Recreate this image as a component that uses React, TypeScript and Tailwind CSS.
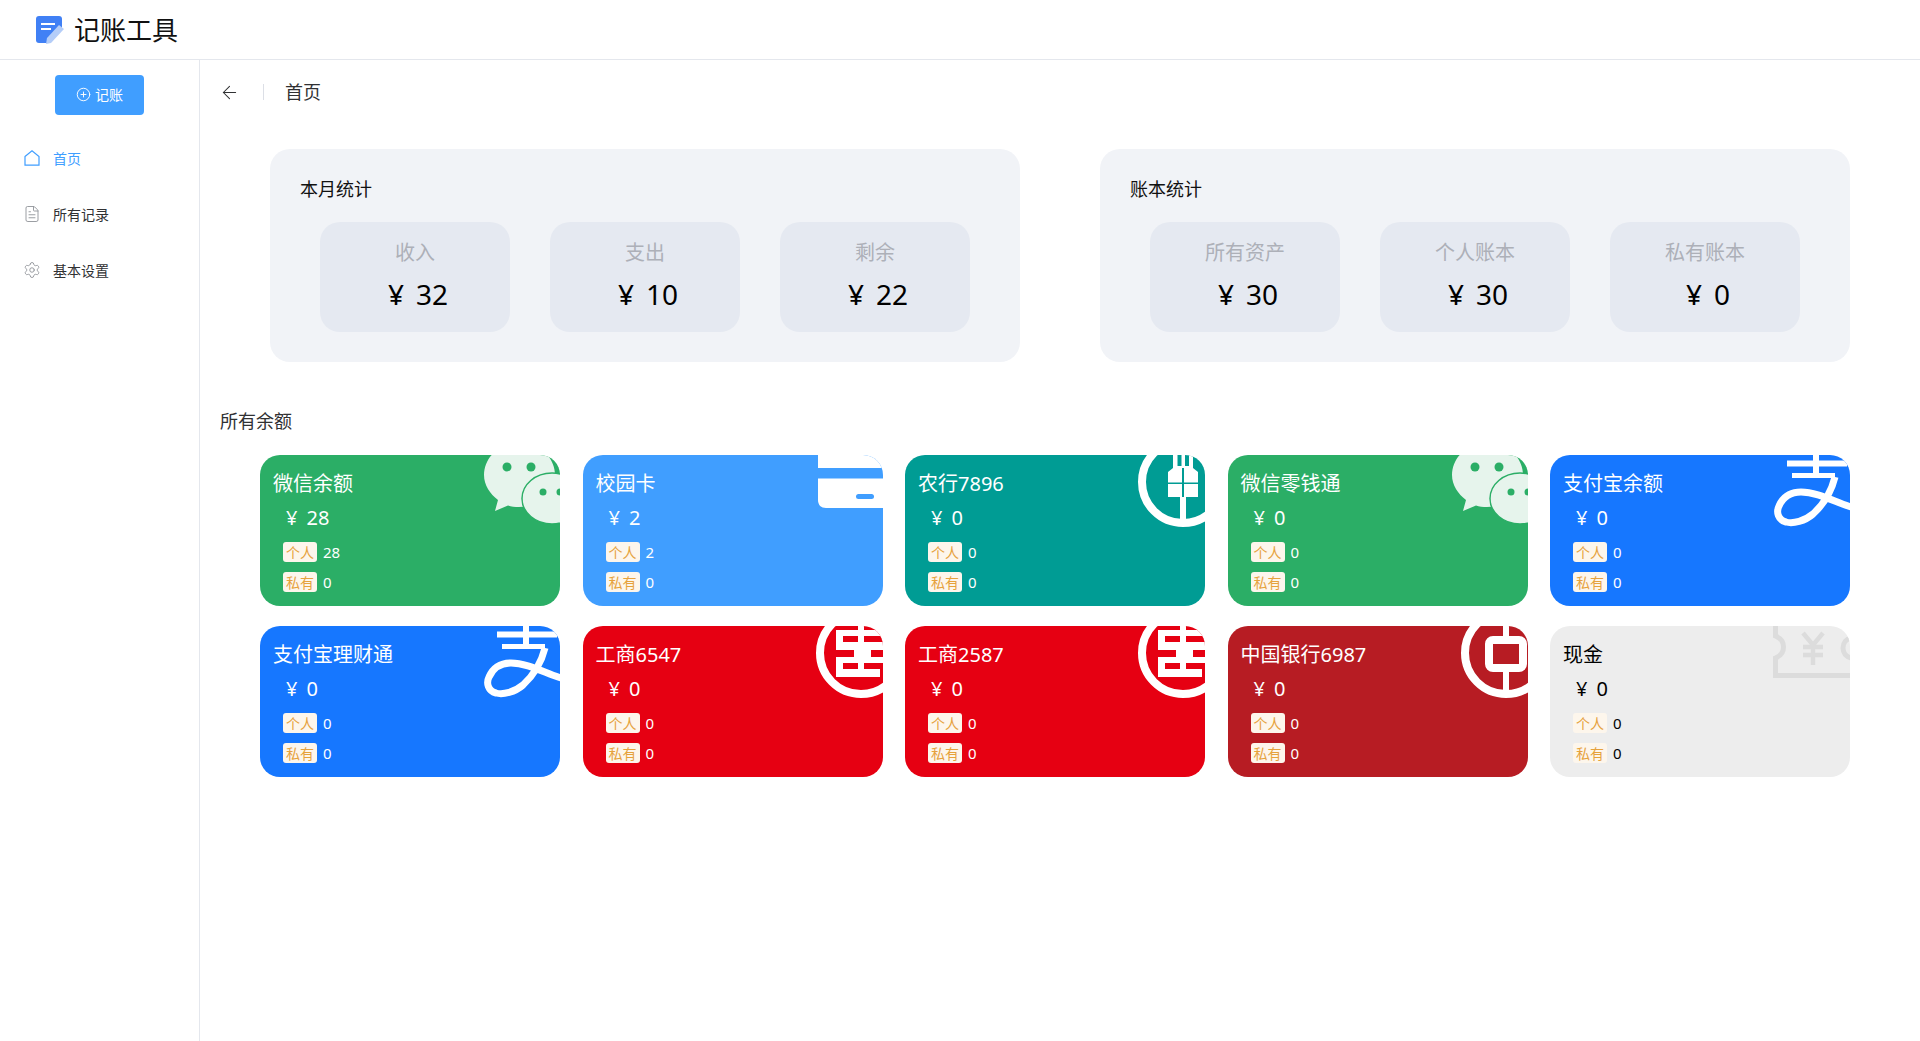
import { ArrowLeft, CirclePlus, FileText, Settings } from "lucide-react";

type CardIcon = "wechat" | "wallet" | "abc" | "icbc" | "boc" | "alipay" | "cash";

const accounts: { name: string; total: number; personal: number; priv: number; bg: string; icon: CardIcon; dark?: boolean }[] = [
  { name: "微信余额", total: 28, personal: 28, priv: 0, bg: "bg-[#2bae66]", icon: "wechat" },
  { name: "校园卡", total: 2, personal: 2, priv: 0, bg: "bg-[#409eff]", icon: "wallet" },
  { name: "农行7896", total: 0, personal: 0, priv: 0, bg: "bg-[#009c94]", icon: "abc" },
  { name: "微信零钱通", total: 0, personal: 0, priv: 0, bg: "bg-[#2bae66]", icon: "wechat" },
  { name: "支付宝余额", total: 0, personal: 0, priv: 0, bg: "bg-[#1677ff]", icon: "alipay" },
  { name: "支付宝理财通", total: 0, personal: 0, priv: 0, bg: "bg-[#1677ff]", icon: "alipay" },
  { name: "工商6547", total: 0, personal: 0, priv: 0, bg: "bg-[#e60012]", icon: "icbc" },
  { name: "工商2587", total: 0, personal: 0, priv: 0, bg: "bg-[#e60012]", icon: "icbc" },
  { name: "中国银行6987", total: 0, personal: 0, priv: 0, bg: "bg-[#b71c23]", icon: "boc" },
  { name: "现金", total: 0, personal: 0, priv: 0, bg: "bg-[#ededed]", icon: "cash", dark: true },
];

const panels = [
  { title: "本月统计", items: [["收入", 32], ["支出", 10], ["剩余", 22]] },
  { title: "账本统计", items: [["所有资产", 30], ["个人账本", 30], ["私有账本", 0]] },
];

function BrandIcon({ icon }: { icon: CardIcon }) {
  // viewBox is in card pixels: the top right corner of a 300px wide card
  return (
    <svg viewBox="220 0 80 80" className="absolute top-0 right-0 h-[80px] w-[80px]">
      {icon === "wechat" && (
        <g>
          <path d="M259 -12c20 0 36 14 36 32s-16 32-36 32c-4 0-8-.5-11-1.500l-13 5.500 3-11c-8-6-14-15-14-25 0-18 16-32 35-32z" fill="#e6f4ec" />
          <circle cx="247" cy="12" r="4.500" fill="#2bae66" />
          <circle cx="271" cy="12" r="4.500" fill="#2bae66" />
          <ellipse cx="292" cy="43.500" rx="30" ry="25.500" fill="#e6f4ec" stroke="#2bae66" strokeWidth="1.500" />
          <circle cx="283" cy="37" r="3.500" fill="#2bae66" />
          <circle cx="300" cy="37" r="3.500" fill="#2bae66" />
        </g>
      )}
      {icon === "wallet" && (
        <g fill="#fff">
          <path d="M240 -4h60v17h-65v-12c0-3 2-5 5-5z" />
          <path d="M235 23.500h65v29.500h-57c-5 0-8-3-8-8z" />
          <rect x="273" y="39" width="18" height="5" rx="2.500" fill="#409eff" />
        </g>
      )}
      {icon === "abc" && (
        <g>
          <circle cx="278" cy="27" r="41" fill="none" stroke="#fff" strokeWidth="8" />
          <path d="M268 -2h20v15l5 4v25h-12v26h-6v-26h-12v-25l5-4z" fill="#fff" />
          <path d="M272.500 -2h4v13h-4zM280 -2h4v13h-4z" fill="#009c94" />
          <rect x="263" y="27.500" width="30" height="1.500" fill="#009c94" />
          <rect x="277" y="13" width="2" height="29" fill="#009c94" />
        </g>
      )}
      {icon === "icbc" && (
        <g>
          <circle cx="278" cy="27" r="41" fill="none" stroke="#fff" strokeWidth="8" />
          <path d="M253 4h44v12h3v21h-3v14h-44z" fill="#fff" />
          <path d="M260 10h37v6h-37zM253 24h18v7h-18zM288 24h12v7h-12zM260 37h37v6h-37z" fill="#e60012" />
          <rect x="275" y="-2" width="6" height="53" fill="#fff" />
        </g>
      )}
      {icon === "boc" && (
        <g>
          <circle cx="278" cy="27" r="41" fill="none" stroke="#fff" strokeWidth="8" />
          <rect x="275" y="-2" width="6" height="66" fill="#fff" />
          <rect x="261" y="14" width="34" height="28" rx="4" fill="#b71c23" stroke="#fff" strokeWidth="8" />
        </g>
      )}
      {icon === "alipay" && (
        <g fill="none" stroke="#fff" strokeWidth="5">
          <path d="M237 8.500h60M266 -2v22" strokeWidth="6" />
          <path d="M242 20.500h43" />
          <path d="M285 22c-3 12-10 26-22 37-8 7-20 10-27 8-8-2-10-10-7-16 4-9 12-14 22-14 16 0 32 9 50 15" strokeWidth="7" />
        </g>
      )}
      {icon === "cash" && (
        <g fill="none" stroke="#dcdcdc" strokeWidth="5">
          <path d="M225.500 -2v12c5 2 8 6 8 11s-3 9-8 11v17.500h76" />
          <path d="M302 12c-6 1-9 5-9 10s3 9 9 10" />
          <path d="M253 7l10 12 10-12M263 19v20M253 21h20M253 29h20" strokeWidth="4.500" />
        </g>
      )}
    </svg>
  );
}

function Tag({ label, value }: { label: string; value: number }) {
  return (
    <div className="flex h-5 items-center gap-[6px]">
      <span className="flex h-5 w-[34px] items-center justify-center rounded-[3px] bg-[#fdf6ec] text-[14px] text-[#e6a23c]">
        {label}
      </span>
      <span className="text-[15px]">{value}</span>
    </div>
  );
}

function AccountCard({ account }: { account: (typeof accounts)[number] }) {
  return (
    <div
      className={`relative h-[151px] w-[300px] overflow-hidden rounded-[20px] pt-[17px] pl-[13px] ${account.bg} ${
        account.dark ? "text-black" : "text-white"
      }`}
    >
      <div className="h-6 text-[20px] leading-6">{account.name}</div>
      <div className="mt-[9px] ml-[13px] flex h-[26px] gap-[9px] text-[20px] leading-[26px]">
        <span>¥</span>
        <span>{account.total}</span>
      </div>
      <div className="mt-[11px] ml-[10px] flex flex-col gap-[10px]">
        <Tag label="个人" value={account.personal} />
        <Tag label="私有" value={account.priv} />
      </div>
      <BrandIcon icon={account.icon} />
    </div>
  );
}

function HomeIcon() {
  return (
    <svg viewBox="0 0 18 18" className="h-[18px] w-[18px]" fill="none" stroke="#409eff" strokeWidth="1.200">
      <path d="M2 7.500 9 1.800l7 5.700v8.700H2z" />
    </svg>
  );
}

function NavItem({ icon, label, active }: { icon: React.ReactNode; label: string; active?: boolean }) {
  return (
    <div className={`flex h-14 items-center gap-[12px] pl-[23px] text-[14px] ${active ? "text-[#409eff]" : "text-[#303133]"}`}>
      {icon}
      <span>{label}</span>
    </div>
  );
}

export default function App() {
  return (
    <div className="flex h-screen w-full flex-col bg-white font-['Noto_Sans','Noto_Sans_CJK_SC',sans-serif] text-[#303133]">
      {/* Header */}
      <header className="flex h-[60px] shrink-0 items-center gap-[10px] border-b border-[#e4e7ed] pl-9">
        <svg viewBox="0 0 28 28" className="h-7 w-7">
          <path d="M3 0h20c2 0 3 1 3 3v11L13 27H3c-2 0-3-1-3-3V3c0-2 1-3 3-3z" fill="#4080f5" />
          <path d="M5 8h14M5 13h10" stroke="#fff" strokeWidth="2" fill="none" />
          <path d="M23 9l5 4-13 14-5 1 1-6z" fill="#b4cdf8" />
        </svg>
        <span className="text-[26px] leading-none text-[#111]">记账工具</span>
      </header>

      <div className="flex min-h-0 flex-1">
        {/* Sidebar */}
        <aside className="w-[200px] shrink-0 border-r border-[#e4e7ed]">
          <div className="flex justify-center pt-[15px] pb-[15px]">
            <button className="flex h-10 w-[89px] items-center justify-center gap-1 rounded bg-[#409eff] pb-[2px] text-[14px] text-white">
              <CirclePlus size={15} strokeWidth={1.500} />
              记账
            </button>
          </div>
          <NavItem icon={<HomeIcon />} label="首页" active />
          <NavItem icon={<FileText size={18} strokeWidth={1.200} color="#909399" />} label="所有记录" />
          <NavItem icon={<Settings size={18} strokeWidth={1.200} color="#909399" />} label="基本设置" />
        </aside>

        {/* Main */}
        <main className="flex-1 p-5">
          <div className="flex h-6 items-center">
            <ArrowLeft size={21} strokeWidth={1.200} className="-ml-px" />
            <div className="mx-[23px] h-4 w-px bg-[#dcdfe6]" />
            <span className="-ml-[2px] text-[18px]">首页</span>
          </div>

          <div className="mt-[45px] flex justify-between pr-[50px] pl-[50px]">
            {panels.map((panel) => (
              <section key={panel.title} className="h-[213px] w-[750px] rounded-[20px] bg-[#f1f3f7] pt-[28px] pl-[30px]">
                <div className="h-6 text-[18px] leading-6 text-[#111]">{panel.title}</div>
                <div className="mt-[21px] ml-[20px] flex gap-[40px]">
                  {panel.items.map(([label, value]) => (
                    <div
                      key={label}
                      className="flex h-[110px] w-[190px] flex-col items-center rounded-[20px] bg-[#e5e9f1] pt-[17px]"
                    >
                      <div className="h-7 text-[20px] leading-7 text-[#adb0b8]">{label}</div>
                      <div className="mt-[9px] ml-[6px] flex h-9 gap-[12px] text-[28px] leading-9 text-black">
                        <span>¥</span>
                        <span>{value}</span>
                      </div>
                    </div>
                  ))}
                </div>
              </section>
            ))}
          </div>

          <div className="mt-[47px] h-6 text-[18px] leading-6">所有余额</div>

          <div className="mt-[22px] mr-[50px] ml-[40px] flex flex-wrap justify-between gap-y-[20px]">
            {accounts.map((account) => (
              <AccountCard key={account.name} account={account} />
            ))}
          </div>
        </main>
      </div>
    </div>
  );
}
